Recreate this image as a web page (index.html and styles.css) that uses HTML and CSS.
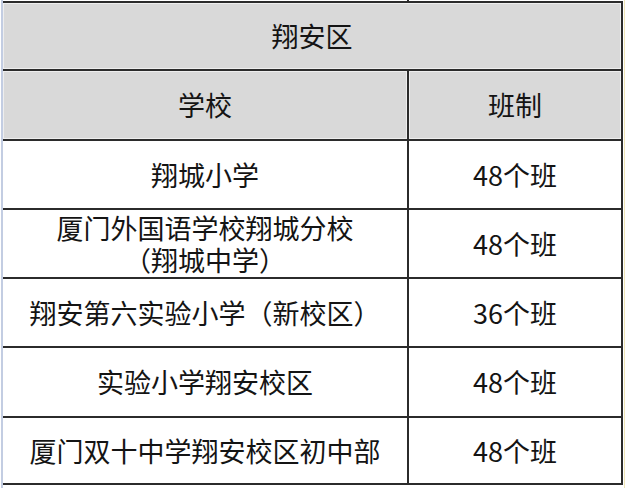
FILE: index.html
```html
<!DOCTYPE html>
<html lang="zh-CN">
<head>
<meta charset="utf-8">
<title>翔安区</title>
<link rel="stylesheet" href="styles.css">
</head>
<body>
<div class="sheet">
  <div class="prev-row"><div class="prev-left"></div><div class="prev-right"></div></div>
  <table class="grid">
    <colgroup><col class="c-school"><col class="c-class"></colgroup>
    <tr class="r1"><th class="head" colspan="2">翔安区</th></tr>
    <tr class="r2"><th class="head">学校</th><th class="head">班制</th></tr>
    <tr class="r3"><td>翔城小学</td><td>48个班</td></tr>
    <tr class="r4"><td>厦门外国语学校翔城分校<br>（翔城中学）</td><td>48个班</td></tr>
    <tr class="r5"><td>翔安第六实验小学（新校区）</td><td>36个班</td></tr>
    <tr class="r6"><td>实验小学翔安校区</td><td>48个班</td></tr>
    <tr class="r7"><td>厦门双十中学翔安校区初中部</td><td>48个班</td></tr>
  </table>
</div>
</body>
</html>
```

FILE: styles.css
```css
html, body {
  margin: 0;
  padding: 0;
  background: #ffffff;
}
body {
  width: 625px;
  height: 488px;
  overflow: hidden;
  font-family: "Noto Sans CJK SC", "Noto Sans", sans-serif;
  color: #141414;
}
.sheet {
  margin-left: 1px;
  border-left: 2px solid #c3cde2;
  border-right: 1px solid #efe6b8;
  width: 621px;
  height: 488px;
  box-sizing: content-box;
}
.prev-row {
  display: flex;
  height: 1px;
}
.prev-left {
  width: 404px;
}
.prev-right {
  width: 2px;
  background: #2b2b2b;
}
.grid {
  border-collapse: separate;
  border-spacing: 0;
  border-top: 2px solid #2b2b2b;
  width: 620px;
  table-layout: fixed;
}
.c-school { width: 406px; }
.c-class { width: 214px; }
.grid th, .grid td {
  padding: 0;
  text-align: center;
  vertical-align: middle;
  font-weight: normal;
  font-size: 27px;
  line-height: 32px;
  border-right: 2px solid #2b2b2b;
  border-bottom: 2px solid #2b2b2b;
  box-sizing: border-box;
}
.grid .head {
  background: #d9d9d9;
  box-shadow: inset 0 0 0 1px #eeeeee;
}
.r1 th { height: 68px; }
.r2 th { height: 70px; }
.r3 td { height: 69px; }
.r4 td { height: 69px; }
.r5 td { height: 69px; }
.r6 td { height: 70px; }
.r7 td { height: 67px; }
```
